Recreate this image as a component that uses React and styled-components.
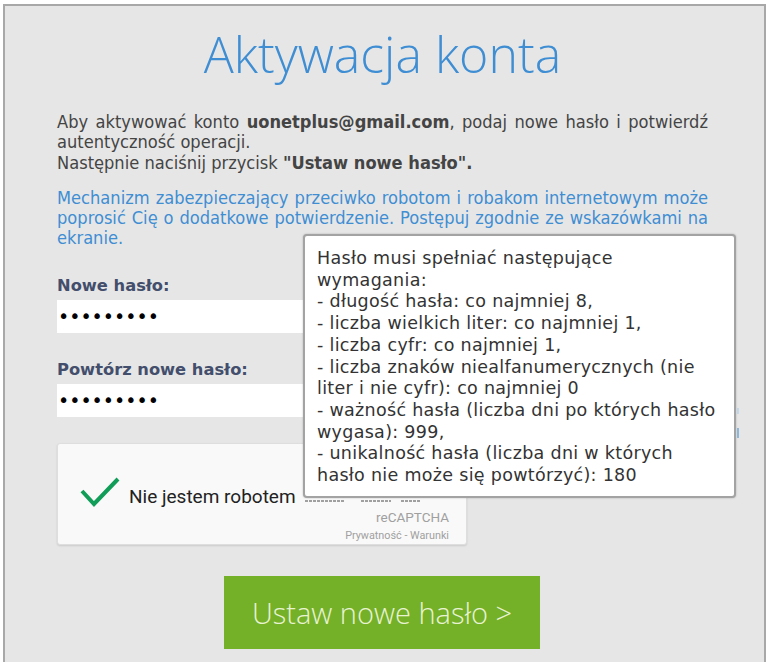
import React from 'react'
import styled, { createGlobalStyle } from 'styled-components'

const GlobalStyle = createGlobalStyle`
    html, body {
        margin: 0;
        padding: 0;
        background: #fff;
    }
`;

const Page = styled.div`
    width: 771px;
    height: 662px;
    overflow: hidden;
    padding: 4px 5px 0 3px;
    box-sizing: border-box;
`;

const Panel = styled.div`
    position: relative;
    height: 700px;
    box-sizing: border-box;
    background: #e6e6e6;
    border: solid #a8a8a8;
    border-width: 2px 2px 0 2px;
    padding: 18px 56px 0 52px;
    font-family: "DejaVu Sans Condensed", "DejaVu Sans", sans-serif;
`;

const Title = styled.h1`
    margin: 0 0 28px;
    font-family: "Open Sans", sans-serif;
    font-size: 50px;
    line-height: 60px;
    font-weight: 300;
    text-align: center;
    color: #3f8ed3;
`;

const Para = styled.p`
    margin: 0 0 ${p => p.$gap || 0}px;
    font-size: 18.1px;
    line-height: 20.3px;
    text-align: justify;
    color: ${p => p.$color || '#444'};
`;

const Form = styled.div`
    display: flex;
    justify-content: space-between;
    margin-top: 26px;
    margin-right: -31px;
`;

const Fields = styled.div`
    width: 410px;
`;

const Label = styled.label`
    display: block;
    margin-bottom: 3px;
    font-family: "DejaVu Sans", sans-serif;
    font-size: 16.3px;
    line-height: 22px;
    font-weight: 700;
    color: #434e6c;
`;

const Input = styled.input`
    display: block;
    width: 100%;
    height: 33px;
    margin-bottom: 26px;
    padding: 0 1px;
    box-sizing: border-box;
    border: 0;
    background: #fff;
    color: #000;
    font-family: "DejaVu Sans", sans-serif;
    font-size: 19px;
`;

const Side = styled.div`
    display: flex;
    flex-direction: column;
    gap: 14px;
    margin-top: 133px;
`;

const Sliver = styled.span`
    display: block;
    width: 2px;
    height: ${p => p.$height}px;
    background: ${p => p.$color};
`;

const Captcha = styled.div`
    display: flex;
    flex-direction: column;
    height: 102px;
    margin-top: 2px;
    box-sizing: border-box;
    background: #f9f9f9;
    border: 1px solid #dedede;
    border-radius: 3px;
    box-shadow: 0 1px 2px rgba(0, 0, 0, 0.12);
    padding: 32px 17px 0 22px;
    font-family: Roboto, sans-serif;
`;

const CaptchaRow = styled.div`
    display: flex;
    align-items: center;
    gap: 9px;
    height: 32px;
    font-size: 19px;
    color: #222;
`;

const CaptchaText = styled.span`
    margin-top: 10px;
    white-space: nowrap;
`;

const CaptchaBrand = styled.div`
    margin-top: 1px;
    text-align: right;
    font-size: 13.5px;
    line-height: 16px;
    color: #a0a0a0;
`;

const CaptchaLinks = styled.div`
    margin-top: 5px;
    text-align: right;
    font-size: 10.8px;
    line-height: 12px;
    color: #a0a0a0;
`;

const Submit = styled.button`
    display: block;
    width: 316px;
    height: 73px;
    margin: 31px 0 0 167px;
    border: 0;
    background: #75b029;
    color: #e8f3d2;
    font-family: "Open Sans", sans-serif;
    font-size: 29px;
    font-weight: 300;
`;

const Tooltip = styled.div`
    position: absolute;
    left: 298px;
    top: 228px;
    width: 433px;
    height: 264px;
    box-sizing: border-box;
    padding: 12px 12px;
    background: #fff;
    border: 2px solid #a3a3a3;
    border-radius: 4px;
    box-shadow: 0 0 2px rgba(0, 0, 0, 0.25);
    font-family: "DejaVu Sans", sans-serif;
    font-size: 17.5px;
    letter-spacing: 0.3px;
    line-height: 21.7px;
    color: #333;
`;

const rules = [
    'Hasło musi spełniać następujące wymagania:',
    '- długość hasła: co najmniej 8,',
    '- liczba wielkich liter: co najmniej 1,',
    '- liczba cyfr: co najmniej 1,',
    '- liczba znaków niealfanumerycznych (nie liter i nie cyfr): co najmniej 0',
    '- ważność hasła (liczba dni po których hasło wygasa): 999,',
    '- unikalność hasła (liczba dni w których hasło nie może się powtórzyć): 180',
]

function App() {
    return (
        <Page>
            <GlobalStyle />
            <Panel>
                <Title>Aktywacja konta</Title>
                <Para $gap={15}>
                    Aby aktywować konto <b>uonetplus@gmail.com</b>, podaj nowe hasło i potwierdź autentyczność operacji.<br />
                    Następnie naciśnij przycisk <b>"Ustaw nowe hasło".</b>
                </Para>
                <Para $color="#3f8ed3">
                    Mechanizm zabezpieczający przeciwko robotom i robakom internetowym może poprosić Cię o dodatkowe potwierdzenie. Postępuj zgodnie ze wskazówkami na ekranie.
                </Para>
                <Form>
                    <Fields>
                        <Label>Nowe hasło:</Label>
                        <Input type="password" defaultValue="123456789" />
                        <Label>Powtórz nowe hasło:</Label>
                        <Input type="password" defaultValue="123456789" />
                        <Captcha>
                            <CaptchaRow>
                                <svg width="40" height="30" viewBox="0 0 40 30">
                                    <path d="M2 14 L14 27 L38 2" fill="none" stroke="#0f9d58" strokeWidth="4" />
                                </svg>
                                <CaptchaText>Nie jestem robotem</CaptchaText>
                                <svg width="118" height="30" viewBox="0 0 118 30">
                                    <path d="M0 24 H40 M56 24 H86 M96 24 H116" fill="none" stroke="#a0a0a0" strokeWidth="2" strokeDasharray="3 1" />
                                </svg>
                            </CaptchaRow>
                            <CaptchaBrand>reCAPTCHA</CaptchaBrand>
                            <CaptchaLinks>Prywatność - Warunki</CaptchaLinks>
                        </Captcha>
                    </Fields>
                    <Side>
                        <Sliver $height={6} $color="#c3d8ea" />
                        <Sliver $height={10} $color="#8fb9dc" />
                    </Side>
                </Form>
                <Submit>Ustaw nowe hasło &gt;</Submit>
                <Tooltip>
                    {rules.map((rule) => <div key={rule}>{rule}</div>)}
                </Tooltip>
            </Panel>
        </Page>
    )
}

export default App
